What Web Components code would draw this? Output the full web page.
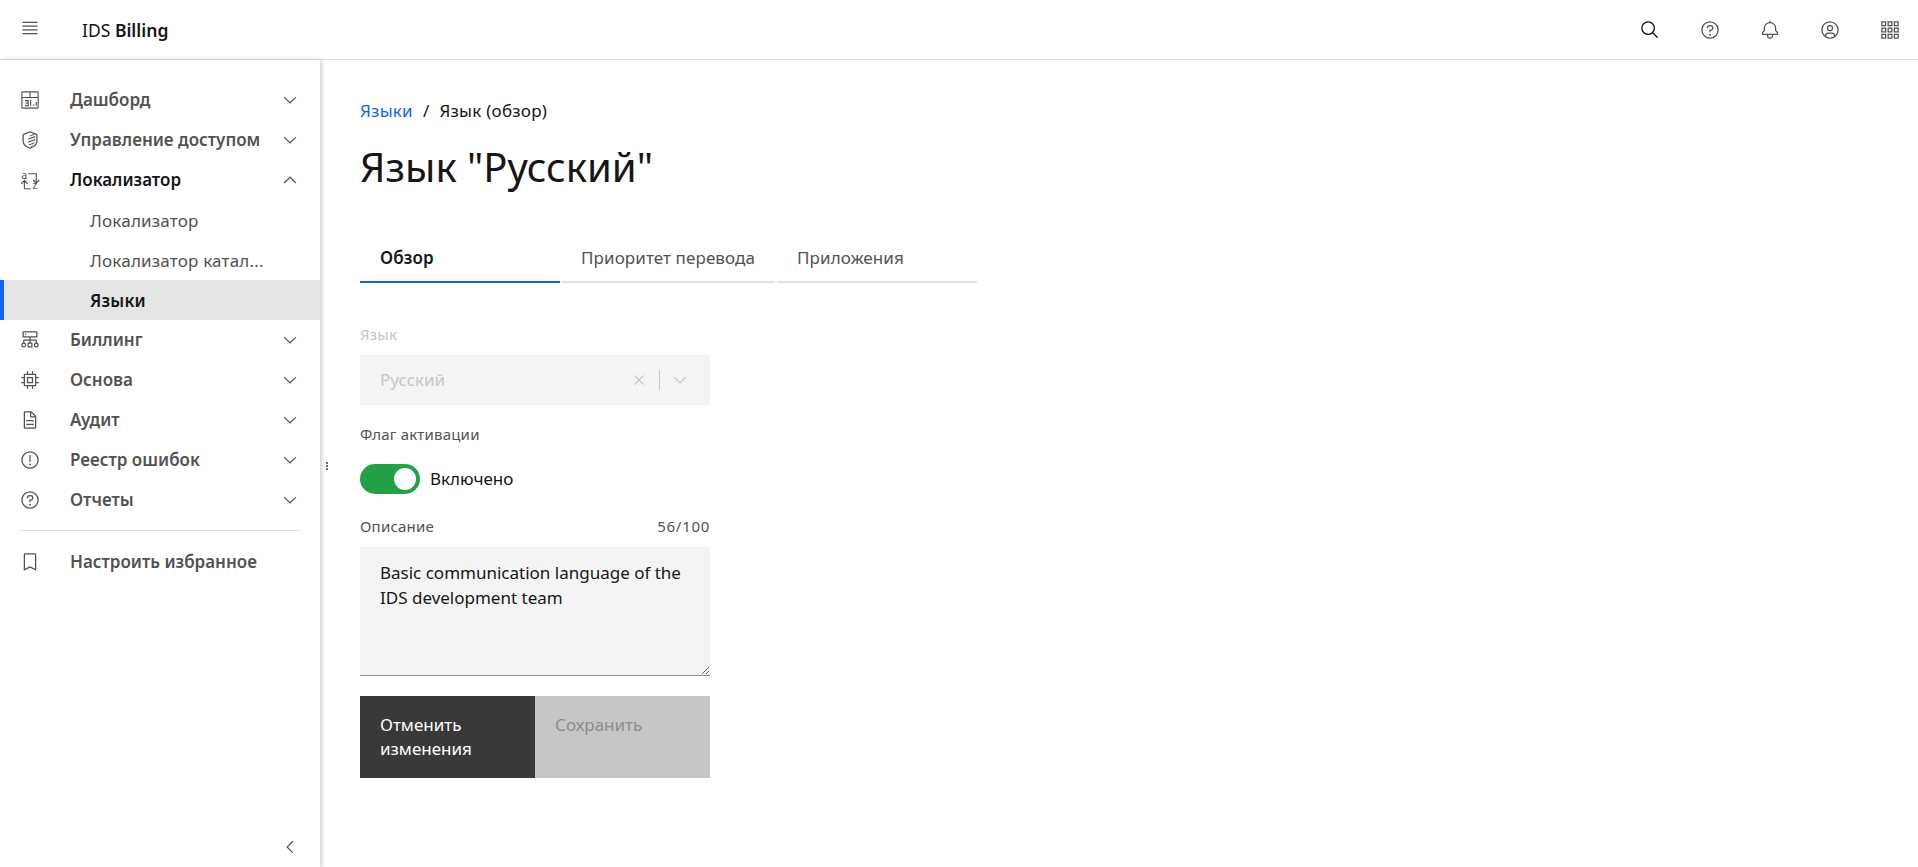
<!DOCTYPE html>
<html lang="ru">
<head>
<meta charset="utf-8">
<title>IDS Billing</title>
<style>
  html, body { margin: 0; height: 100%; overflow: hidden; background: #fff; }
  body { font-family: "Noto Sans", Inter, sans-serif; color: #161616; }
</style>
</head>
<body>
<app-shell>
  <app-header slot="header"></app-header>
  <side-nav slot="nav">
    <side-item icon="dash">Дашборд</side-item>
    <side-item icon="shield">Управление доступом</side-item>
    <side-item icon="sort" open>Локализатор</side-item>
    <side-sub>Локализатор</side-sub>
    <side-sub>Локализатор катал...</side-sub>
    <side-sub active>Языки</side-sub>
    <side-item icon="tree">Биллинг</side-item>
    <side-item icon="chip">Основа</side-item>
    <side-item icon="doc">Аудит</side-item>
    <side-item icon="warn">Реестр ошибок</side-item>
    <side-item icon="help">Отчеты</side-item>
    <side-item icon="bookmark" plain divided>Настроить избранное</side-item>
  </side-nav>
  <language-page></language-page>
</app-shell>

<script>
const icons = {
  menu: '<path d="M4 6H28V8H4zM4 12H28V14H4zM4 18H28V20H4zM4 24H28V26H4z"/>',
  search: '<path d="M29,27.5859l-7.5521-7.5521a11.0177,11.0177,0,1,0-1.4141,1.4141L27.5859,29ZM4,13a9,9,0,1,1,9,9A9.01,9.01,0,0,1,4,13Z"/>',
  help: '<path d="M16,2A14,14,0,1,0,30,16,14,14,0,0,0,16,2Zm0,26A12,12,0,1,1,28,16,12,12,0,0,1,16,28Z"/><circle cx="16" cy="23.5" r="1.5"/><path d="M17,8H15.5A4.49,4.49,0,0,0,11,12.5V13h2v-.5A2.5,2.5,0,0,1,15.5,10H17a2.5,2.5,0,0,1,0,5H15v4.5h2V17a4.5,4.5,0,0,0,0-9Z"/>',
  bell: '<path d="M28.7071,19.293,26,16.5859V13a10.0136,10.0136,0,0,0-9-9.9492V1H15V3.0508A10.0136,10.0136,0,0,0,6,13v3.5859L3.2929,19.293A1,1,0,0,0,3,20v3a1,1,0,0,0,1,1h7v.7768a5.152,5.152,0,0,0,4.5,5.1987A5.0057,5.0057,0,0,0,21,25V24h7a1,1,0,0,0,1-1V20A1,1,0,0,0,28.7071,19.293ZM19,25a3,3,0,0,1-6,0V24h6Zm8-3H5V20.4141L7.707,17.707A1,1,0,0,0,8,17V13a8,8,0,0,1,16,0v4a1,1,0,0,0,.293.707L27,20.4141Z"/>',
  user: '<path d="M16,8a5,5,0,1,0,5,5A5,5,0,0,0,16,8Zm0,8a3,3,0,1,1,3-3A3.0034,3.0034,0,0,1,16,16Z"/><path d="M16,2A14,14,0,1,0,30,16,14.0158,14.0158,0,0,0,16,2ZM10,26.3765V25a3.0033,3.0033,0,0,1,3-3h6a3.0033,3.0033,0,0,1,3,3v1.3765a11.8989,11.8989,0,0,1-12,0Zm13.9925-1.4507A5.0016,5.0016,0,0,0,19,20H13a5.0016,5.0016,0,0,0-4.9925,4.9258,12,12,0,1,1,15.985,0Z"/>',
  grid: '<g fill="none" stroke="currentColor" stroke-width="2"><rect x="3" y="3" width="6" height="6"/><rect x="13" y="3" width="6" height="6"/><rect x="23" y="3" width="6" height="6"/><rect x="3" y="13" width="6" height="6"/><rect x="13" y="13" width="6" height="6"/><rect x="23" y="13" width="6" height="6"/><rect x="3" y="23" width="6" height="6"/><rect x="13" y="23" width="6" height="6"/><rect x="23" y="23" width="6" height="6"/></g>',
  down: '<path d="M16 22L6 12 7.4 10.6 16 19.2 24.6 10.6 26 12z"/>',
  up: '<path d="M16 10L26 20 24.6 21.4 16 12.8 7.4 21.4 6 20z"/>',
  left: '<path d="M10 16L20 6 21.4 7.4 12.8 16 21.4 24.6 20 26z"/>',
  close: '<path d="M24 9.4L22.6 8 16 14.6 9.4 8 8 9.4 14.6 16 8 22.6 9.4 24 16 17.4 22.6 24 24 22.6 17.4 16 24 9.4z"/>',
  dash: '<g fill="none" stroke="currentColor" stroke-width="1.8"><rect x="3" y="3" width="26" height="26" rx="1"/><path d="M3 12H29M16 3V12"/><path d="M8 17H13V25H8M9 21H13M17 16V25M22 23V25M26 19V25"/></g>',
  shield: '<path d="M16 2L6 5.6A3 3 0 0 0 4 8.4V18c0 6 5.4 10 12 12 6.6-2 12-6 12-12V8.4a3 3 0 0 0-2-2.8zm10 16c0 4.6-4.4 8.2-10 10-5.600-1.800-10-5.400-10-10V8.400a1 1 0 0 1 .7-.95L16 4.100l9.300 3.350a1 1 0 0 1 .7.95z"/><path d="M15 9l7-2.500 1.500 1-8.500 3zM13 13.500l11-4v2l-11 4zM13 18.500l11-4v2l-11 4zM14 23l9.500-3.500-1 2L15 24.500zM17 26l4-1.700-1.500 1.700-2 1z"/>',
  sort: '<g fill="none" stroke="currentColor" stroke-width="1.8"><path d="M13 6H26V21M21 16L26 21L31 16"/><path d="M7 30V18M2 22L7 17L12 22M7 30H17"/></g><text x="2" y="14" font-size="17" font-family="Noto Sans, sans-serif" fill="currentColor">a</text><text x="20" y="30" font-size="16" font-family="Noto Sans, sans-serif" fill="currentColor">z</text>',
  tree: '<path d="M27 2H5a1 1 0 0 0-1 1v8a1 1 0 0 0 1 1h10v3H7a2 2 0 0 0-2 2v3.100a4 4 0 1 0 2 0V17h8v3h-2a1 1 0 0 0-1 1v6a1 1 0 0 0 1 1h6a1 1 0 0 0 1-1v-6a1 1 0 0 0-1-1h-2v-3h8v3.100a4 4 0 1 0 2 0V17a2 2 0 0 0-2-2h-8v-3h10a1 1 0 0 0 1-1V3a1 1 0 0 0-1-1zM8 24a2 2 0 1 1-2-2 2 2 0 0 1 2 2zM18 26h-4v-4h4zM28 24a2 2 0 1 1-2-2 2 2 0 0 1 2 2zM26 10H6V4h20z"/><path d="M8 6h2v2H8z"/>',
  chip: '<path d="M11,11V21H21V11Zm8,8H13V13h6Z"/><path d="M30,13V11H26V8a2,2,0,0,0-2-2H21V2H19V6H13V2H11V6H8A2,2,0,0,0,6,8v3H2v2H6v6H2v2H6v3a2,2,0,0,0,2,2h3v4h2V26h6v4h2V26h3a2,2,0,0,0,2-2V21h4V19H26V13ZM24,24H8V8H24Z"/>',
  doc: '<path d="M25.7,9.3l-7-7C18.5,2.1,18.3,2,18,2H8C6.900,2,6,2.900,6,4v24c0,1.100,0.900,2,2,2h16c1.100,0,2-0.900,2-2V10C26,9.700,25.900,9.500,25.700,9.300z M18,4.400l5.600,5.600H18V4.400z M24,28H8V4h8v6c0,1.100,0.900,2,2,2h6V28z"/><path d="M10 22H22V24H10zM10 16H22V18H10z"/>',
  warn: '<path d="M16,2A14,14,0,1,0,30,16,14,14,0,0,0,16,2Zm0,26A12,12,0,1,1,28,16,12,12,0,0,1,16,28Z"/><path d="M15 8H17V19H15z"/><circle cx="16" cy="23" r="1.500"/>',
  bookmark: '<path d="M24,4V26.750l-7.100-3.590-.9-.45-.9.45L8,26.750V4H24m0-2H8A2,2,0,0,0,6,4V30l10-5,10,5V4a2,2,0,0,0-2-2Z"/>'
}

const svg = (name, size = 20) =>
  `<svg xmlns="http://www.w3.org/2000/svg" viewBox="0 0 32 32" width="${size}" height="${size}" fill="currentColor" overflow="visible" aria-hidden="true">${icons[name]}</svg>`

class AppShell extends HTMLElement {
  connectedCallback() {
    this.attachShadow({ mode: "open" }).innerHTML = `
      <style>
        :host { display: grid; grid-template: 60px 1fr / 320px 1fr; height: 100vh; }
        ::slotted([slot=header]) { grid-column: 1 / -1; }
        .handle { position: absolute; left: 326px; top: 462px; width: 2px; display: grid; gap: 1px; }
        .handle i { width: 2px; height: 2px; background: #6f6f6f; }
      </style>
      <slot name="header"></slot>
      <slot name="nav"></slot>
      <slot></slot>
      <div class="handle"><i></i><i></i><i></i></div>
    `
  }
}

class AppHeader extends HTMLElement {
  connectedCallback() {
    this.attachShadow({ mode: "open" }).innerHTML = `
      <style>
        :host { display: flex; align-items: center; height: 60px; box-sizing: border-box; border-bottom: 1px solid #e0e0e0; color: #525252; }
        .menu { display: flex; margin-left: 20px; margin-top: -3px; }
        .logo { margin-left: 42px; font: 400 17.5px/20px "Noto Sans", sans-serif; color: #161616; margin-top: 1px; }
        .logo b { font-weight: 600; }
        .tools { margin-left: auto; margin-right: -2px; display: flex; margin-top: 1px; }
        .tools span { display: flex; width: 60px; justify-content: center; }
        .tools span:first-child { color: #161616; }
      </style>
      <span class="menu">${svg("menu")}</span>
      <span class="logo">IDS <b>Billing</b></span>
      <div class="tools">
        <span>${svg("search")}</span><span>${svg("help")}</span><span>${svg("bell")}</span><span>${svg("user")}</span><span>${svg("grid")}</span>
      </div>
    `
  }
}

class SideNav extends HTMLElement {
  connectedCallback() {
    this.attachShadow({ mode: "open" }).innerHTML = `
      <style>
        :host { display: flex; flex-direction: column; position: relative; box-shadow: 2px 0 4px rgba(0,0,0,.18); padding-top: 20px; box-sizing: border-box; height: 807px; background: #fff; }
        .collapse { margin-top: auto; height: 40px; display: flex; justify-content: flex-end; align-items: center; padding-right: 20px; color: #525252; }
      </style>
      <slot></slot>
      <div class="collapse">${svg("left")}</div>
    `
  }
}

class SideItem extends HTMLElement {
  connectedCallback() {
    const open = this.hasAttribute("open")
    const plain = this.hasAttribute("plain")
    this.attachShadow({ mode: "open" }).innerHTML = `
      <style>
        :host { display: block; color: ${open ? "#161616" : "#525252"}; }
        :host([divided]) { margin: 10px 20px 0; padding-top: 10px; border-top: 1px solid #e0e0e0; }
        :host([divided]) .row { padding-left: 0; margin-top: 1px; }
        .row { display: flex; align-items: center; height: 40px; padding: 0 20px; }
        .icon { display: flex; width: 20px; color: #525252; }
        .label { margin-left: 30px; font: 600 17px/20px "Noto Sans", sans-serif; white-space: nowrap; flex: 1; }
        .chev { display: flex; color: #525252; }
      </style>
      <div class="row">
        <span class="icon">${svg(this.getAttribute("icon"))}</span>
        <span class="label"><slot></slot></span>
        ${plain ? "" : `<span class="chev">${svg(open ? "up" : "down")}</span>`}
      </div>
    `
  }
}

class SideSub extends HTMLElement {
  connectedCallback() {
    this.attachShadow({ mode: "open" }).innerHTML = `
      <style>
        :host { display: flex; align-items: center; height: 40px; box-sizing: border-box; padding: 2px 0 0 90px; font: 400 17px/20px "Noto Sans", sans-serif; letter-spacing: .2px; color: #525252; border-left: 0 solid #0f62fe; }
        :host([active]) { background: #e5e5e5; color: #161616; font-weight: 600; border-left-width: 4px; padding-left: 86px; }
      </style>
      <slot></slot>
    `
  }
}

class LanguagePage extends HTMLElement {
  connectedCallback() {
    this.attachShadow({ mode: "open" }).innerHTML = `
      <style>
        :host { display: block; padding: 41px 40px 0; font: 400 17px/20px "Noto Sans", sans-serif; color: #161616; }
        .crumbs { display: flex; gap: 10px; line-height: 20px; letter-spacing: .25px; }
        .crumbs a { color: #0f62fe; }
        h1 { margin: 21px 0 0; font: 400 40px/50px "Noto Sans", sans-serif; }
        .tabs { display: flex; gap: 2px; margin-top: 56px; }
        .tab { min-width: 160px; padding: 0 20px 13px; line-height: 20px; border-bottom: 2px solid #e0e0e0; color: #525252; letter-spacing: .1px; }
        .tab.on { color: #161616; font-weight: 600; border-color: #0f62fe; margin-right: -1px; }
        form { width: 350px; margin-top: 43px; }
        .label { font-size: 15px; line-height: 16px; padding-bottom: 2px; letter-spacing: .2px; color: #525252; display: flex; justify-content: space-between; }
        .label .count { letter-spacing: .7px; }
        .select { margin-top: 11px; height: 50px; background: #f4f4f4; color: #c6c6c6; display: flex; align-items: center; padding: 0 20px; }
        .select .v { flex: 1; }
        .select i { width: 1px; height: 20px; background: #c6c6c6; margin: 0 10px; }
        .select svg { display: block; }
        .toggle { display: flex; align-items: center; gap: 10px; margin-top: 20px; }
        .track { width: 60px; height: 30px; border-radius: 15px; background: #24a148; display: flex; justify-content: flex-end; align-items: center; padding-right: 4px; box-sizing: border-box; }
        .track b { width: 22px; height: 22px; border-radius: 50%; background: #fff; }
        .area { margin-top: 11px; height: 129px; box-sizing: border-box; padding: 13px 20px; background: #f4f4f4; border-bottom: 1px solid #8d8d8d; line-height: 25px; overflow: auto; resize: vertical; }
        .btns { display: flex; margin-top: 20px; }
        .btns div { flex: 1; height: 82px; box-sizing: border-box; padding: 17px 20px; line-height: 24px; }
        .cancel { background: #393939; color: #fff; }
        .save { background: #c6c6c6; color: #8d8d8d; }
      </style>
      <div class="crumbs"><a>Языки</a><span>/</span><span>Язык (обзор)</span></div>
      <h1>Язык "Русский"</h1>
      <div class="tabs">
        <div class="tab on">Обзор</div>
        <div class="tab">Приоритет перевода</div>
        <div class="tab">Приложения</div>
      </div>
      <form>
        <div class="label" style="color:#c6c6c6">Язык</div>
        <div class="select"><span class="v">Русский</span>${svg("close")}<i></i>${svg("down")}</div>
        <div class="label" style="margin-top:21px">Флаг активации</div>
        <div class="toggle"><span class="track"><b></b></span><span>Включено</span></div>
        <div class="label" style="margin-top:24px"><span>Описание</span><span class="count">56/100</span></div>
        <div class="area">Basic communication language of the IDS development team</div>
        <div class="btns"><div class="cancel">Отменить изменения</div><div class="save">Сохранить</div></div>
      </form>
    `
  }
}

customElements.define("app-shell", AppShell)
customElements.define("app-header", AppHeader)
customElements.define("side-nav", SideNav)
customElements.define("side-item", SideItem)
customElements.define("side-sub", SideSub)
customElements.define("language-page", LanguagePage)
</script>
</body>
</html>
